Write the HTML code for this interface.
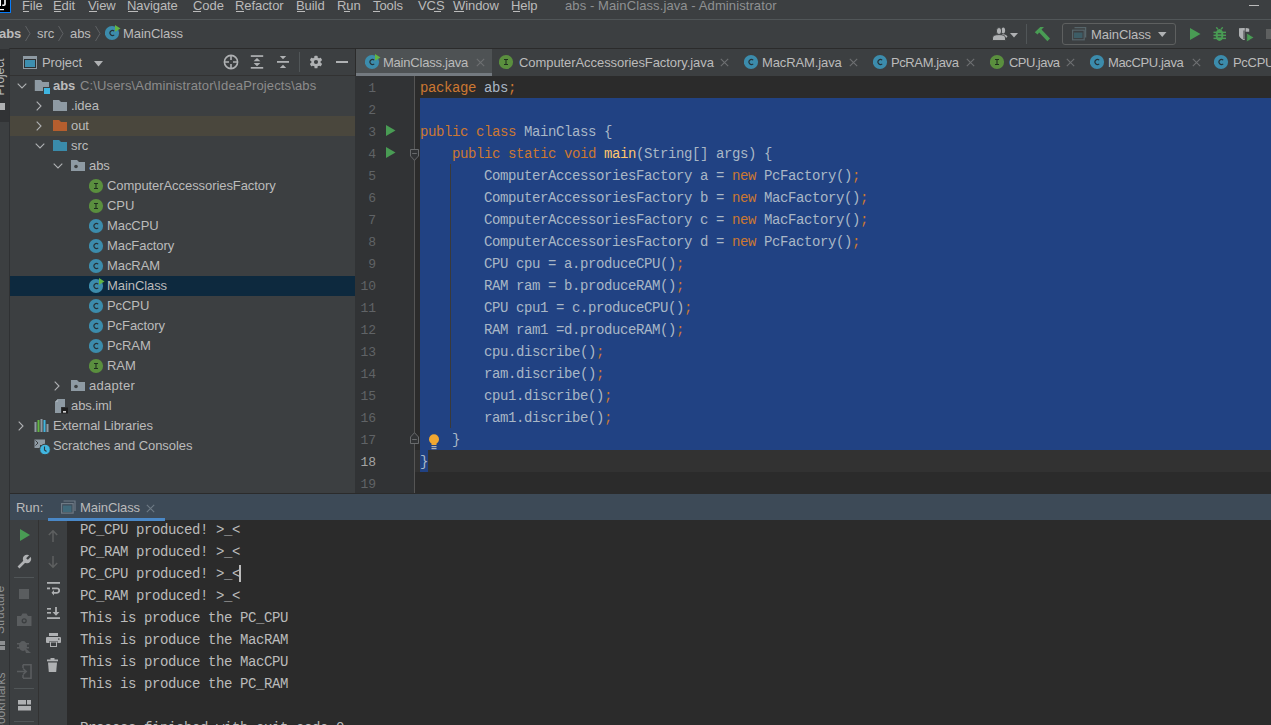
<!DOCTYPE html>
<html><head><meta charset="utf-8">
<style>
*{margin:0;padding:0;box-sizing:border-box}
html,body{width:1271px;height:725px;overflow:hidden;background:#3C3F41;font-family:"Liberation Sans",sans-serif;font-size:13px;color:#BBBBBB;position:relative}
.a{position:absolute;display:block}
.t{position:absolute;white-space:pre;line-height:20px;font-size:13px;letter-spacing:-0.07px}
.m{font-family:"Liberation Mono",monospace;font-size:14px;letter-spacing:-0.4px;white-space:pre;position:absolute;line-height:20px;color:#A9B7C6}
.k{color:#CC7832}.f{color:#FFC66D}
u{text-decoration:none;border-bottom:1px solid #BBBBBB;display:inline-block;line-height:12px}
</style></head><body>

<div class="a" style="left:0px;top:19px;width:1271px;height:1px;background:#515658;"></div>
<div class="a" style="left:0px;top:0px;width:11px;height:13px;background:#087CFA;"></div>
<div class="a" style="left:0px;top:0px;width:10px;height:12px;background:#000000;"></div>
<div class="a" style="left:0px;top:0px;width:1px;height:6px;background:#FFFFFF;"></div>
<svg class="a" style="left:0px;top:0px;" width="10" height="12" viewBox="0 0 10 12"><path d="M5 0 V4.2 Q5 5.2 3.8 5.2 H2.3" stroke="#fff" stroke-width="1.6" fill="none"/><rect x="0" y="9" width="4" height="1.2" fill="#fff"/></svg>
<div class="t" style="left:22px;top:-4px;color:#BBBBBB;">File</div>
<div class="t" style="left:53px;top:-4px;color:#BBBBBB;">Edit</div>
<div class="t" style="left:88px;top:-4px;color:#BBBBBB;">View</div>
<div class="t" style="left:127px;top:-4px;color:#BBBBBB;">Navigate</div>
<div class="t" style="left:193px;top:-4px;color:#BBBBBB;">Code</div>
<div class="t" style="left:235px;top:-4px;color:#BBBBBB;">Refactor</div>
<div class="t" style="left:296px;top:-4px;color:#BBBBBB;">Build</div>
<div class="t" style="left:337px;top:-4px;color:#BBBBBB;">Run</div>
<div class="t" style="left:373px;top:-4px;color:#BBBBBB;">Tools</div>
<div class="t" style="left:418px;top:-4px;color:#BBBBBB;">VCS</div>
<div class="t" style="left:453px;top:-4px;color:#BBBBBB;">Window</div>
<div class="t" style="left:511px;top:-4px;color:#BBBBBB;">Help</div>
<div class="a" style="left:23px;top:11px;width:6px;height:1px;background:#BBBBBB;"></div>
<div class="a" style="left:54px;top:11px;width:7px;height:1px;background:#BBBBBB;"></div>
<div class="a" style="left:89px;top:11px;width:8px;height:1px;background:#BBBBBB;"></div>
<div class="a" style="left:128px;top:11px;width:10px;height:1px;background:#BBBBBB;"></div>
<div class="a" style="left:193px;top:11px;width:8px;height:1px;background:#BBBBBB;"></div>
<div class="a" style="left:236px;top:11px;width:8px;height:1px;background:#BBBBBB;"></div>
<div class="a" style="left:297px;top:11px;width:8px;height:1px;background:#BBBBBB;"></div>
<div class="a" style="left:344px;top:11px;width:6px;height:1px;background:#BBBBBB;"></div>
<div class="a" style="left:373px;top:11px;width:7px;height:1px;background:#BBBBBB;"></div>
<div class="a" style="left:434px;top:11px;width:7px;height:1px;background:#BBBBBB;"></div>
<div class="a" style="left:454px;top:11px;width:10px;height:1px;background:#BBBBBB;"></div>
<div class="a" style="left:513px;top:11px;width:7px;height:1px;background:#BBBBBB;"></div>
<div class="t" style="left:565px;top:-4px;color:#8F9192;letter-spacing:0.1px">abs - MainClass.java - Administrator</div>
<div class="a" style="left:1249px;top:5px;width:10px;height:1px;background:#BBBBBB;"></div>
<div class="a" style="left:0px;top:48px;width:1271px;height:1px;background:#2B2B2B;"></div>
<div class="t" style="left:-1px;top:24px;color:#BBBBBB;font-weight:bold;">abs</div>
<svg class="a" style="left:25px;top:26px;" width="6" height="15" viewBox="0 0 6 15"><path d="M0.5 0 L5 7.5 L0.5 15" stroke="#5F6264" stroke-width="1" fill="none"/></svg>
<svg class="a" style="left:58px;top:26px;" width="6" height="15" viewBox="0 0 6 15"><path d="M0.5 0 L5 7.5 L0.5 15" stroke="#5F6264" stroke-width="1" fill="none"/></svg>
<svg class="a" style="left:95px;top:26px;" width="6" height="15" viewBox="0 0 6 15"><path d="M0.5 0 L5 7.5 L0.5 15" stroke="#5F6264" stroke-width="1" fill="none"/></svg>
<div class="t" style="left:37px;top:24px;color:#BBBBBB;">src</div>
<div class="t" style="left:70px;top:24px;color:#BBBBBB;">abs</div>
<svg class="a" style="left:105px;top:25px;" width="16" height="16" viewBox="0 0 16 16"><circle cx="7" cy="8" r="7.1" fill="#3C8CAC"/><path d="M9.2 6.2 A2.5 2.5 0 1 0 9.2 9.8" stroke="#263238" stroke-width="1.1" fill="none"/><path d="M10 0 L15.5 3.4 L10 6.8 Z" fill="#62B543"/></svg>
<div class="t" style="left:123px;top:24px;color:#BBBBBB;">MainClass</div>
<svg class="a" style="left:992px;top:26px;" width="17" height="15" viewBox="0 0 17 15"><g fill="#AFB1B3"><ellipse cx="11.3" cy="4.5" rx="1.8" ry="3"/><path d="M10 8 Q14 8 15.5 10.6 L14 12 L10 10 Z"/></g><g fill="#AFB1B3" stroke="#3C3F41" stroke-width="0.9"><ellipse cx="7" cy="5" rx="2.6" ry="3.5"/><path d="M0.5 14.5 V12 Q0.5 8.6 7 8.6 Q13.5 8.6 13.5 12 V14.5 Z"/></g></svg>
<svg class="a" style="left:1010px;top:33px;" width="8" height="5" viewBox="0 0 8 5"><path d="M0 0 H8 L4 4.5 Z" fill="#AFB1B3"/></svg>
<div class="a" style="left:1026px;top:24px;width:1px;height:20px;background:#515658;"></div>
<svg class="a" style="left:1034px;top:26px;" width="17" height="16" viewBox="0 0 17 16"><path d="M0.8 6.3 L6.3 1 H10 L6.8 4.2 L3.6 8.4 Z" fill="#499C54"/><path d="M4.3 5.6 L7 3 L16 12.5 L13.4 15.2 Z" fill="#499C54"/></svg>
<div class="a" style="left:1062px;top:23px;width:114px;height:22px;border:1px solid #5E6060;border-radius:3px"></div>
<svg class="a" style="left:1072px;top:26px;" width="15" height="15" viewBox="0 0 15 15"><path d="M2.5 1.6 H13.6 V11.5" stroke="#56656A" stroke-width="1.3" fill="none"/><rect x="0.6" y="4.2" width="11.6" height="9.6" stroke="#56656A" stroke-width="1.2" fill="none"/><rect x="2" y="6.5" width="8.5" height="5.5" fill="#3D5D66"/></svg>
<div class="t" style="left:1091px;top:25px;color:#BBBBBB;">MainClass</div>
<svg class="a" style="left:1158px;top:32px;" width="9" height="5" viewBox="0 0 9 5"><path d="M0 0 H8.5 L4.25 5 Z" fill="#AFB1B3"/></svg>
<svg class="a" style="left:1190px;top:28px;" width="11" height="12" viewBox="0 0 11 12"><path d="M0 0 L10.5 6 L0 12 Z" fill="#499C54"/></svg>
<svg class="a" style="left:1213px;top:27px;" width="14" height="14" viewBox="0 0 14 14"><g fill="#499C54"><ellipse cx="6.5" cy="8" rx="3.9" ry="6"/><rect x="0.5" y="4.6" width="12.5" height="1.5"/><rect x="0.5" y="7.6" width="12.5" height="1.5"/><rect x="0.5" y="10.6" width="12.5" height="1.5"/></g><path d="M3.3 0.3 L5 2.4 M9.7 0.3 L8 2.4" stroke="#499C54" stroke-width="1.4"/><rect x="4.8" y="6.2" width="3.4" height="1.1" fill="#3C3F41"/><rect x="4.8" y="9.2" width="3.4" height="1.1" fill="#3C3F41"/></svg>
<svg class="a" style="left:1238px;top:27px;" width="17" height="16" viewBox="0 0 17 16"><path d="M1 1.6 Q3.5 1 6 1 V13 Q2 11.5 1 8 Z" fill="#AFB1B3"/><path d="M7.6 1 Q10 1 11.2 1.8 V4.8 H7.6 Z" fill="#AFB1B3"/><path d="M1 1.6 Q3.5 1 6.8 1 V13 Q2 11.5 1 8 Z" fill="#AFB1B3"/><path d="M6 3.5 V12" stroke="#3C3F41" stroke-width="1"/><path d="M8.7 6 L16 10.5 L8.7 15 Z" fill="#499C54" stroke="#3C3F41" stroke-width="0.8"/></svg>
<div class="a" style="left:1266px;top:29px;width:5px;height:10px;background:#5E6060;"></div>
<div class="a" style="left:0px;top:48px;width:9px;height:677px;background:#3C3F41;"></div>
<div class="a" style="left:0px;top:49px;width:9px;height:73px;background:#313335;"></div>
<div class="a" style="left:9px;top:48px;width:1px;height:677px;background:#2F3133;"></div>
<div class="t" style="left:-25px;top:67px;transform:rotate(-90deg);transform-origin:center;color:#BBBBBB;font-size:12px;width:50px;text-align:center">Project</div>
<div class="a" style="left:0px;top:103px;width:5px;height:7px;background:#AFB1B3;"></div>
<div class="t" style="left:-30px;top:600px;transform:rotate(-90deg);color:#8E9092;font-size:12px;width:60px;text-align:center">Structure</div>
<div class="a" style="left:0px;top:641px;width:5px;height:4px;background:#8E9092;"></div>
<div class="a" style="left:0px;top:646px;width:5px;height:4px;background:#8E9092;"></div>
<div class="t" style="left:-34px;top:687px;transform:rotate(-90deg);color:#8E9092;font-size:12px;width:70px;text-align:left">Bookmarks</div>
<div class="a" style="left:10px;top:75px;width:345px;height:1px;background:#323232;"></div>
<svg class="a" style="left:23px;top:56px;" width="14" height="13" viewBox="0 0 14 13"><rect x="0" y="0" width="14" height="13" fill="#8E9AA3"/><rect x="1" y="3" width="12" height="9" fill="#2E3133"/><rect x="2" y="4" width="10" height="7" fill="#3D8FB0"/></svg>
<div class="t" style="left:42px;top:53px;color:#BBBBBB;">Project</div>
<svg class="a" style="left:94px;top:61px;" width="9" height="6" viewBox="0 0 9 6"><path d="M0 0 H9 L4.5 5.5 Z" fill="#AFB1B3"/></svg>
<svg class="a" style="left:223px;top:54px;" width="16" height="16" viewBox="0 0 16 16"><circle cx="8" cy="8" r="6.6" stroke="#AFB1B3" stroke-width="1.6" fill="none"/><path d="M8 1 V6 M8 10 V15 M1 8 H6 M10 8 H15" stroke="#AFB1B3" stroke-width="1.6"/></svg>
<svg class="a" style="left:250px;top:54px;" width="14" height="16" viewBox="0 0 14 16"><rect x="0.8" y="1.2" width="12.4" height="1.7" fill="#AFB1B3"/><rect x="0.8" y="13" width="12.4" height="1.7" fill="#AFB1B3"/><path d="M3.6 7.2 L7 4 L10.4 7.2 Z M3.6 9 L7 12.2 L10.4 9 Z" fill="#AFB1B3"/></svg>
<svg class="a" style="left:276px;top:54px;" width="14" height="16" viewBox="0 0 14 16"><rect x="1" y="7" width="12" height="1.8" fill="#AFB1B3"/><path d="M3.8 2 H10.2 L7 5.2 Z M3.8 14 H10.2 L7 10.7 Z" fill="#AFB1B3"/></svg>
<div class="a" style="left:299px;top:52px;width:1px;height:20px;background:#515658;"></div>
<svg class="a" style="left:308px;top:54px;" width="16" height="16" viewBox="0 0 16 16"><g transform="translate(8 8) scale(0.9) translate(-8 -8)"><g fill="#AFB1B3"><circle cx="8" cy="8" r="5.2"/><rect x="6.3" y="1" width="3.4" height="14" rx="0.6"/><rect x="6.3" y="1" width="3.4" height="14" rx="0.6" transform="rotate(60 8 8)"/><rect x="6.3" y="1" width="3.4" height="14" rx="0.6" transform="rotate(120 8 8)"/></g><circle cx="8" cy="8" r="2.3" fill="#3C3F41"/></g></svg>
<div class="a" style="left:336px;top:61px;width:12px;height:2px;background:#AFB1B3;"></div>
<div class="a" style="left:10px;top:116px;width:345px;height:20px;background:#4A473D;"></div>
<div class="a" style="left:10px;top:276px;width:345px;height:20px;background:#0D293E;"></div>
<svg class="a" style="left:17px;top:83px;" width="10" height="6" viewBox="0 0 10 6"><path d="M0.7 0.7 L5 5 L9.3 0.7" stroke="#AFB1B3" stroke-width="1.1" fill="none"/></svg>
<svg class="a" style="left:34px;top:80px;" width="17" height="15" viewBox="0 0 17 15"><path d="M0.8 0 H7 L8.5 2 H15 V11 H0.8 Z" fill="#8E9AA3"/><rect x="9" y="7" width="8" height="8" fill="#3C3F41"/><rect x="10" y="8" width="6" height="6" fill="#3FB5E0"/></svg>
<div class="t" style="left:53px;top:76px;color:#BBBBBB;font-weight:bold;">abs</div>
<div class="t" style="left:80px;top:76px;color:#8C8C8C;letter-spacing:0.13px">C:\Users\Administrator\IdeaProjects\abs</div>
<svg class="a" style="left:36px;top:101px;" width="6" height="10" viewBox="0 0 6 10"><path d="M0.7 0.7 L5 5 L0.7 9.3" stroke="#AFB1B3" stroke-width="1.1" fill="none"/></svg>
<svg class="a" style="left:53px;top:100px;" width="14" height="11" viewBox="0 0 14 11"><path d="M0 0 H6 L8 2 H14 V11 H0 Z" fill="#8E9AA3"/></svg>
<div class="t" style="left:71px;top:96px;color:#BBBBBB;">.idea</div>
<svg class="a" style="left:36px;top:121px;" width="6" height="10" viewBox="0 0 6 10"><path d="M0.7 0.7 L5 5 L0.7 9.3" stroke="#AFB1B3" stroke-width="1.1" fill="none"/></svg>
<svg class="a" style="left:53px;top:120px;" width="14" height="11" viewBox="0 0 14 11"><path d="M0 0 H6 L8 2 H14 V11 H0 Z" fill="#B55E2E"/></svg>
<div class="t" style="left:71px;top:116px;color:#BBBBBB;">out</div>
<svg class="a" style="left:35px;top:143px;" width="10" height="6" viewBox="0 0 10 6"><path d="M0.7 0.7 L5 5 L9.3 0.7" stroke="#AFB1B3" stroke-width="1.1" fill="none"/></svg>
<svg class="a" style="left:53px;top:140px;" width="14" height="11" viewBox="0 0 14 11"><path d="M0 0 H6 L8 2 H14 V11 H0 Z" fill="#3A8BAA"/></svg>
<div class="t" style="left:71px;top:136px;color:#BBBBBB;">src</div>
<svg class="a" style="left:53px;top:163px;" width="10" height="6" viewBox="0 0 10 6"><path d="M0.7 0.7 L5 5 L9.3 0.7" stroke="#AFB1B3" stroke-width="1.1" fill="none"/></svg>
<svg class="a" style="left:71px;top:160px;" width="14" height="11" viewBox="0 0 14 11"><path d="M0 0 H6 L8 2 H14 V11 H0 Z" fill="#8E9AA3"/><circle cx="5" cy="6.5" r="1.8" fill="#3C3F41"/></svg>
<div class="t" style="left:89px;top:156px;color:#BBBBBB;">abs</div>
<svg class="a" style="left:89px;top:178px;" width="16" height="16" viewBox="0 0 16 16"><circle cx="7" cy="8" r="7.1" fill="#5A8F3E"/><path d="M5 5.5 H9 M7 5.5 V10.5 M5 10.5 H9" stroke="#1F2E1F" stroke-width="1.05" fill="none"/></svg>
<div class="t" style="left:107px;top:176px;color:#BBBBBB;">ComputerAccessoriesFactory</div>
<svg class="a" style="left:89px;top:198px;" width="16" height="16" viewBox="0 0 16 16"><circle cx="7" cy="8" r="7.1" fill="#5A8F3E"/><path d="M5 5.5 H9 M7 5.5 V10.5 M5 10.5 H9" stroke="#1F2E1F" stroke-width="1.05" fill="none"/></svg>
<div class="t" style="left:107px;top:196px;color:#BBBBBB;">CPU</div>
<svg class="a" style="left:89px;top:218px;" width="16" height="16" viewBox="0 0 16 16"><circle cx="7" cy="8" r="7.1" fill="#3C8CAC"/><path d="M9.2 6.2 A2.5 2.5 0 1 0 9.2 9.8" stroke="#263238" stroke-width="1.1" fill="none"/></svg>
<div class="t" style="left:107px;top:216px;color:#BBBBBB;">MacCPU</div>
<svg class="a" style="left:89px;top:238px;" width="16" height="16" viewBox="0 0 16 16"><circle cx="7" cy="8" r="7.1" fill="#3C8CAC"/><path d="M9.2 6.2 A2.5 2.5 0 1 0 9.2 9.8" stroke="#263238" stroke-width="1.1" fill="none"/></svg>
<div class="t" style="left:107px;top:236px;color:#BBBBBB;">MacFactory</div>
<svg class="a" style="left:89px;top:258px;" width="16" height="16" viewBox="0 0 16 16"><circle cx="7" cy="8" r="7.1" fill="#3C8CAC"/><path d="M9.2 6.2 A2.5 2.5 0 1 0 9.2 9.8" stroke="#263238" stroke-width="1.1" fill="none"/></svg>
<div class="t" style="left:107px;top:256px;color:#BBBBBB;">MacRAM</div>
<svg class="a" style="left:89px;top:278px;" width="16" height="16" viewBox="0 0 16 16"><circle cx="7" cy="8" r="7.1" fill="#3C8CAC"/><path d="M9.2 6.2 A2.5 2.5 0 1 0 9.2 9.8" stroke="#263238" stroke-width="1.1" fill="none"/><path d="M10 0 L15.5 3.4 L10 6.8 Z" fill="#62B543"/></svg>
<div class="t" style="left:107px;top:276px;color:#BBBBBB;">MainClass</div>
<svg class="a" style="left:89px;top:298px;" width="16" height="16" viewBox="0 0 16 16"><circle cx="7" cy="8" r="7.1" fill="#3C8CAC"/><path d="M9.2 6.2 A2.5 2.5 0 1 0 9.2 9.8" stroke="#263238" stroke-width="1.1" fill="none"/></svg>
<div class="t" style="left:107px;top:296px;color:#BBBBBB;">PcCPU</div>
<svg class="a" style="left:89px;top:318px;" width="16" height="16" viewBox="0 0 16 16"><circle cx="7" cy="8" r="7.1" fill="#3C8CAC"/><path d="M9.2 6.2 A2.5 2.5 0 1 0 9.2 9.8" stroke="#263238" stroke-width="1.1" fill="none"/></svg>
<div class="t" style="left:107px;top:316px;color:#BBBBBB;">PcFactory</div>
<svg class="a" style="left:89px;top:338px;" width="16" height="16" viewBox="0 0 16 16"><circle cx="7" cy="8" r="7.1" fill="#3C8CAC"/><path d="M9.2 6.2 A2.5 2.5 0 1 0 9.2 9.8" stroke="#263238" stroke-width="1.1" fill="none"/></svg>
<div class="t" style="left:107px;top:336px;color:#BBBBBB;">PcRAM</div>
<svg class="a" style="left:89px;top:358px;" width="16" height="16" viewBox="0 0 16 16"><circle cx="7" cy="8" r="7.1" fill="#5A8F3E"/><path d="M5 5.5 H9 M7 5.5 V10.5 M5 10.5 H9" stroke="#1F2E1F" stroke-width="1.05" fill="none"/></svg>
<div class="t" style="left:107px;top:356px;color:#BBBBBB;">RAM</div>
<svg class="a" style="left:54px;top:381px;" width="6" height="10" viewBox="0 0 6 10"><path d="M0.7 0.7 L5 5 L0.7 9.3" stroke="#AFB1B3" stroke-width="1.1" fill="none"/></svg>
<svg class="a" style="left:71px;top:380px;" width="14" height="11" viewBox="0 0 14 11"><path d="M0 0 H6 L8 2 H14 V11 H0 Z" fill="#8E9AA3"/><circle cx="5" cy="6.5" r="1.8" fill="#3C3F41"/></svg>
<div class="t" style="left:89px;top:376px;color:#BBBBBB;letter-spacing:0.3px">adapter</div>
<svg class="a" style="left:54px;top:399px;" width="15" height="15" viewBox="0 0 15 15"><path d="M1 3 L3.8 0 H11 V14 H1 Z" fill="#8E9AA3"/><path d="M1 3 L3.8 0 V3 Z" fill="#A8B2B9"/><rect x="7" y="8" width="8" height="7" fill="#3C3F41"/><rect x="7.5" y="8.5" width="6.5" height="6" fill="#1E1E1E"/><rect x="9" y="12.2" width="3" height="1.3" fill="#fff"/></svg>
<div class="t" style="left:71px;top:396px;color:#BBBBBB;">abs.iml</div>
<svg class="a" style="left:18px;top:421px;" width="6" height="10" viewBox="0 0 6 10"><path d="M0.7 0.7 L5 5 L0.7 9.3" stroke="#AFB1B3" stroke-width="1.1" fill="none"/></svg>
<svg class="a" style="left:34px;top:419px;" width="16" height="13" viewBox="0 0 16 13"><rect x="0.5" y="3" width="2" height="10" fill="#8E9AA3"/><rect x="3.5" y="1" width="2" height="12" fill="#62B543"/><rect x="6.5" y="0" width="2" height="13" fill="#8E9AA3"/><rect x="9.5" y="1" width="2" height="12" fill="#40B6E0"/><rect x="12.5" y="5" width="2" height="8" fill="#8E9AA3"/></svg>
<div class="t" style="left:53px;top:416px;color:#BBBBBB;">External Libraries</div>
<svg class="a" style="left:34px;top:439px;" width="17" height="16" viewBox="0 0 17 16"><path d="M0.5 0.5 H11 V6 H6 V9 H0.5 Z" fill="#8E9AA3"/><path d="M1.5 1.5 L4 4 L1.5 6.5" stroke="#3C3F41" stroke-width="1" fill="none"/><circle cx="11" cy="10.5" r="5.3" fill="#40B6E0" stroke="#3C3F41" stroke-width="1"/><path d="M10.5 7.5 V11 L12.5 12.5" stroke="#2B3A40" stroke-width="1.1" fill="none"/></svg>
<div class="t" style="left:53px;top:436px;color:#BBBBBB;">Scratches and Consoles</div>
<div class="a" style="left:355px;top:48px;width:1px;height:445px;background:#2B2B2B;"></div>
<div class="a" style="left:356px;top:49px;width:915px;height:27px;background:#3C3F41;"></div>
<div class="a" style="left:356px;top:49px;width:136px;height:24px;background:#4E5254;"></div>
<div class="a" style="left:356px;top:73px;width:136px;height:3px;background:#747A80;"></div>
<svg class="a" style="left:365px;top:54px;" width="16" height="16" viewBox="0 0 16 16"><circle cx="7" cy="8" r="7.1" fill="#3C8CAC"/><path d="M9.2 6.2 A2.5 2.5 0 1 0 9.2 9.8" stroke="#263238" stroke-width="1.1" fill="none"/><path d="M10 0 L15.5 3.4 L10 6.8 Z" fill="#62B543"/></svg>
<div class="t" style="left:383px;top:53px;color:#BBBBBB;letter-spacing:-0.22px">MainClass.java</div>
<svg class="a" style="left:476px;top:58px;" width="9" height="9" viewBox="0 0 9 9"><path d="M0.8 0.8 L8.2 8.2 M8.2 0.8 L0.8 8.2" stroke="#6E7072" stroke-width="1.1"/></svg>
<svg class="a" style="left:499px;top:54px;" width="16" height="16" viewBox="0 0 16 16"><circle cx="7" cy="8" r="7.1" fill="#5A8F3E"/><path d="M5 5.5 H9 M7 5.5 V10.5 M5 10.5 H9" stroke="#1F2E1F" stroke-width="1.05" fill="none"/></svg>
<div class="t" style="left:519px;top:53px;color:#BBBBBB;letter-spacing:-0.07px">ComputerAccessoriesFactory.java</div>
<svg class="a" style="left:720px;top:58px;" width="9" height="9" viewBox="0 0 9 9"><path d="M0.8 0.8 L8.2 8.2 M8.2 0.8 L0.8 8.2" stroke="#6E7072" stroke-width="1.1"/></svg>
<svg class="a" style="left:744px;top:54px;" width="16" height="16" viewBox="0 0 16 16"><circle cx="7" cy="8" r="7.1" fill="#3C8CAC"/><path d="M9.2 6.2 A2.5 2.5 0 1 0 9.2 9.8" stroke="#263238" stroke-width="1.1" fill="none"/></svg>
<div class="t" style="left:762px;top:53px;color:#BBBBBB;letter-spacing:-0.11px">MacRAM.java</div>
<svg class="a" style="left:849px;top:58px;" width="9" height="9" viewBox="0 0 9 9"><path d="M0.8 0.8 L8.2 8.2 M8.2 0.8 L0.8 8.2" stroke="#6E7072" stroke-width="1.1"/></svg>
<svg class="a" style="left:873px;top:54px;" width="16" height="16" viewBox="0 0 16 16"><circle cx="7" cy="8" r="7.1" fill="#3C8CAC"/><path d="M9.2 6.2 A2.5 2.5 0 1 0 9.2 9.8" stroke="#263238" stroke-width="1.1" fill="none"/></svg>
<div class="t" style="left:891px;top:53px;color:#BBBBBB;letter-spacing:-0.4px">PcRAM.java</div>
<svg class="a" style="left:966px;top:58px;" width="9" height="9" viewBox="0 0 9 9"><path d="M0.8 0.8 L8.2 8.2 M8.2 0.8 L0.8 8.2" stroke="#6E7072" stroke-width="1.1"/></svg>
<svg class="a" style="left:990px;top:54px;" width="16" height="16" viewBox="0 0 16 16"><circle cx="7" cy="8" r="7.1" fill="#5A8F3E"/><path d="M5 5.5 H9 M7 5.5 V10.5 M5 10.5 H9" stroke="#1F2E1F" stroke-width="1.05" fill="none"/></svg>
<div class="t" style="left:1009px;top:53px;color:#BBBBBB;letter-spacing:-0.55px">CPU.java</div>
<svg class="a" style="left:1066px;top:58px;" width="9" height="9" viewBox="0 0 9 9"><path d="M0.8 0.8 L8.2 8.2 M8.2 0.8 L0.8 8.2" stroke="#6E7072" stroke-width="1.1"/></svg>
<svg class="a" style="left:1090px;top:54px;" width="16" height="16" viewBox="0 0 16 16"><circle cx="7" cy="8" r="7.1" fill="#3C8CAC"/><path d="M9.2 6.2 A2.5 2.5 0 1 0 9.2 9.8" stroke="#263238" stroke-width="1.1" fill="none"/></svg>
<div class="t" style="left:1108px;top:53px;color:#BBBBBB;letter-spacing:-0.37px">MacCPU.java</div>
<svg class="a" style="left:1192px;top:58px;" width="9" height="9" viewBox="0 0 9 9"><path d="M0.8 0.8 L8.2 8.2 M8.2 0.8 L0.8 8.2" stroke="#6E7072" stroke-width="1.1"/></svg>
<svg class="a" style="left:1214px;top:54px;" width="16" height="16" viewBox="0 0 16 16"><circle cx="7" cy="8" r="7.1" fill="#3C8CAC"/><path d="M9.2 6.2 A2.5 2.5 0 1 0 9.2 9.8" stroke="#263238" stroke-width="1.1" fill="none"/></svg>
<div class="t" style="left:1233px;top:53px;color:#BBBBBB;letter-spacing:-0.3px">PcCPU.java</div>
<div class="a" style="left:355px;top:76px;width:59px;height:417px;background:#313335;"></div>
<div class="a" style="left:414px;top:76px;width:1px;height:417px;background:#555555;"></div>
<div class="a" style="left:415px;top:76px;width:856px;height:417px;background:#2B2B2B;"></div>
<div class="a" style="left:420px;top:98px;width:851px;height:352px;background:#214283;"></div>
<div class="a" style="left:415px;top:450px;width:856px;height:22px;background:#323232;"></div>
<div class="a" style="left:420px;top:450px;width:8px;height:22px;background:#214283;"></div>
<div class="a" style="left:450px;top:164px;width:1px;height:264px;background:#3A3A3A;"></div>
<div class="m" style="left:344px;top:79px;width:32px;text-align:right;color:#606366;font-size:13px;letter-spacing:0">1</div>
<div class="m" style="left:344px;top:101px;width:32px;text-align:right;color:#606366;font-size:13px;letter-spacing:0">2</div>
<div class="m" style="left:344px;top:123px;width:32px;text-align:right;color:#606366;font-size:13px;letter-spacing:0">3</div>
<div class="m" style="left:344px;top:145px;width:32px;text-align:right;color:#606366;font-size:13px;letter-spacing:0">4</div>
<div class="m" style="left:344px;top:167px;width:32px;text-align:right;color:#606366;font-size:13px;letter-spacing:0">5</div>
<div class="m" style="left:344px;top:189px;width:32px;text-align:right;color:#606366;font-size:13px;letter-spacing:0">6</div>
<div class="m" style="left:344px;top:211px;width:32px;text-align:right;color:#606366;font-size:13px;letter-spacing:0">7</div>
<div class="m" style="left:344px;top:233px;width:32px;text-align:right;color:#606366;font-size:13px;letter-spacing:0">8</div>
<div class="m" style="left:344px;top:255px;width:32px;text-align:right;color:#606366;font-size:13px;letter-spacing:0">9</div>
<div class="m" style="left:344px;top:277px;width:32px;text-align:right;color:#606366;font-size:13px;letter-spacing:0">10</div>
<div class="m" style="left:344px;top:299px;width:32px;text-align:right;color:#606366;font-size:13px;letter-spacing:0">11</div>
<div class="m" style="left:344px;top:321px;width:32px;text-align:right;color:#606366;font-size:13px;letter-spacing:0">12</div>
<div class="m" style="left:344px;top:343px;width:32px;text-align:right;color:#606366;font-size:13px;letter-spacing:0">13</div>
<div class="m" style="left:344px;top:365px;width:32px;text-align:right;color:#606366;font-size:13px;letter-spacing:0">14</div>
<div class="m" style="left:344px;top:387px;width:32px;text-align:right;color:#606366;font-size:13px;letter-spacing:0">15</div>
<div class="m" style="left:344px;top:409px;width:32px;text-align:right;color:#606366;font-size:13px;letter-spacing:0">16</div>
<div class="m" style="left:344px;top:431px;width:32px;text-align:right;color:#606366;font-size:13px;letter-spacing:0">17</div>
<div class="m" style="left:344px;top:453px;width:32px;text-align:right;color:#A4A3A3;font-size:13px;letter-spacing:0">18</div>
<div class="m" style="left:344px;top:475px;width:32px;text-align:right;color:#606366;font-size:13px;letter-spacing:0">19</div>
<svg class="a" style="left:386px;top:125px;" width="10" height="11" viewBox="0 0 10 11"><path d="M0 0 L9.5 5.5 L0 11 Z" fill="#499C54"/></svg>
<svg class="a" style="left:386px;top:147px;" width="10" height="11" viewBox="0 0 10 11"><path d="M0 0 L9.5 5.5 L0 11 Z" fill="#499C54"/></svg>
<svg class="a" style="left:410px;top:149px;" width="9" height="12" viewBox="0 0 9 12"><path d="M0.5 0.5 H8.5 V7 L4.5 11.3 L0.5 7 Z" fill="#313335" stroke="#686A6C" stroke-width="1"/><path d="M2.2 4.5 H6.8" stroke="#686A6C" stroke-width="1"/></svg>
<svg class="a" style="left:410px;top:432px;" width="9" height="12" viewBox="0 0 9 12"><path d="M0.5 11.5 H8.5 V5 L4.5 0.7 L0.5 5 Z" fill="#313335" stroke="#686A6C" stroke-width="1"/><path d="M2.2 7.5 H6.8" stroke="#686A6C" stroke-width="1"/></svg>
<svg class="a" style="left:428px;top:434px;" width="12" height="16" viewBox="0 0 12 16"><circle cx="6" cy="5.2" r="5" fill="#F0A732"/><rect x="3.5" y="8" width="5" height="3" fill="#F0A732"/><rect x="3.5" y="12" width="5" height="1.2" fill="#AFB1B3"/><rect x="3.5" y="14" width="5" height="1.2" fill="#AFB1B3"/></svg>
<div class="m" style="left:420px;top:78px;"><span class="k">package</span> abs<span class="k">;</span></div>
<div class="m" style="left:420px;top:122px;"><span class="k">public class</span> MainClass {</div>
<div class="m" style="left:420px;top:144px;">    <span class="k">public static void</span> <span class="f">main</span>(String[] args) {</div>
<div class="m" style="left:420px;top:166px;">        ComputerAccessoriesFactory a = <span class="k">new</span> PcFactory()<span class="k">;</span></div>
<div class="m" style="left:420px;top:188px;">        ComputerAccessoriesFactory b = <span class="k">new</span> MacFactory()<span class="k">;</span></div>
<div class="m" style="left:420px;top:210px;">        ComputerAccessoriesFactory c = <span class="k">new</span> MacFactory()<span class="k">;</span></div>
<div class="m" style="left:420px;top:232px;">        ComputerAccessoriesFactory d = <span class="k">new</span> PcFactory()<span class="k">;</span></div>
<div class="m" style="left:420px;top:254px;">        CPU cpu = a.produceCPU()<span class="k">;</span></div>
<div class="m" style="left:420px;top:276px;">        RAM ram = b.produceRAM()<span class="k">;</span></div>
<div class="m" style="left:420px;top:298px;">        CPU cpu1 = c.produceCPU()<span class="k">;</span></div>
<div class="m" style="left:420px;top:320px;">        RAM ram1 =d.produceRAM()<span class="k">;</span></div>
<div class="m" style="left:420px;top:342px;">        cpu.discribe()<span class="k">;</span></div>
<div class="m" style="left:420px;top:364px;">        ram.discribe()<span class="k">;</span></div>
<div class="m" style="left:420px;top:386px;">        cpu1.discribe()<span class="k">;</span></div>
<div class="m" style="left:420px;top:408px;">        ram1.discribe()<span class="k">;</span></div>
<div class="m" style="left:452px;top:430px;">}</div>
<div class="m" style="left:420px;top:452px;">}</div>
<div class="a" style="left:10px;top:493px;width:1261px;height:1px;background:#2B2B2B;"></div>
<div class="a" style="left:10px;top:494px;width:1261px;height:26px;background:#3D4A57;"></div>
<div class="t" style="left:16px;top:498px;color:#BBBBBB;">Run:</div>
<svg class="a" style="left:61px;top:500px;" width="15" height="14" viewBox="0 0 15 14"><path d="M2.5 1 H14 V11" stroke="#6E7A85" stroke-width="1.2" fill="none"/><rect x="0.6" y="3.6" width="11.5" height="9.5" stroke="#6E7A85" stroke-width="1.2" fill="none"/><rect x="2" y="5.5" width="8.5" height="6.5" fill="#40697A"/></svg>
<div class="t" style="left:80px;top:498px;color:#BBBBBB;">MainClass</div>
<svg class="a" style="left:146px;top:504px;" width="9" height="9" viewBox="0 0 9 9"><path d="M0.8 0.8 L8.2 8.2 M8.2 0.8 L0.8 8.2" stroke="#6E7A85" stroke-width="1.1"/></svg>
<div class="a" style="left:10px;top:520px;width:28px;height:205px;background:#3C3F41;"></div>
<div class="a" style="left:38px;top:520px;width:1px;height:205px;background:#323232;"></div>
<div class="a" style="left:39px;top:520px;width:28px;height:205px;background:#3C3F41;"></div>
<div class="a" style="left:67px;top:520px;width:1204px;height:205px;background:#2B2B2B;"></div>
<div class="a" style="left:48px;top:518px;width:117px;height:3px;background:#4A88C7;"></div>
<svg class="a" style="left:20px;top:529px;" width="10" height="12" viewBox="0 0 10 12"><path d="M0 0 L10 6 L0 12 Z" fill="#499C54"/></svg>
<svg class="a" style="left:17px;top:554px;" width="15" height="15" viewBox="0 0 15 15"><path d="M1.5 13.5 L8 7" stroke="#AFB1B3" stroke-width="2.6"/><circle cx="10" cy="5" r="4.2" fill="#AFB1B3"/><path d="M10 5 L14 1" stroke="#3C3F41" stroke-width="2.4"/></svg>
<div class="a" style="left:14px;top:577px;width:20px;height:1px;background:#515658;"></div>
<div class="a" style="left:19px;top:589px;width:10px;height:10px;background:#5A5D5F;"></div>
<svg class="a" style="left:17px;top:613px;" width="15" height="13" viewBox="0 0 15 13"><path d="M0 3 H4 L5.5 0.5 H9.5 L11 3 H14.5 V13 H0 Z" fill="#5A5D5F"/><circle cx="7.2" cy="7.8" r="2.6" fill="#3C3F41"/><circle cx="7.2" cy="7.8" r="1.3" fill="#5A5D5F"/></svg>
<svg class="a" style="left:17px;top:638px;" width="15" height="16" viewBox="0 0 15 16"><g fill="#5A5D5F"><ellipse cx="6" cy="8" rx="4" ry="5"/><rect x="0" y="5" width="12" height="1.5"/><rect x="0" y="9" width="12" height="1.5"/><path d="M7 9 L14 15 L9 15 Z"/></g></svg>
<svg class="a" style="left:17px;top:664px;" width="15" height="15" viewBox="0 0 15 15"><path d="M6 0.8 H14 V14.2 H6 M6 11 V14 M6 0.8 V4" stroke="#5A5D5F" stroke-width="1.6" fill="none"/><path d="M0 7.5 H9 M6 4.5 L9.2 7.5 L6 10.5" stroke="#5A5D5F" stroke-width="1.6" fill="none"/></svg>
<div class="a" style="left:14px;top:688px;width:20px;height:1px;background:#515658;"></div>
<svg class="a" style="left:18px;top:700px;" width="13" height="11" viewBox="0 0 13 11"><rect x="0" y="0" width="8" height="4.5" fill="#AFB1B3"/><rect x="9" y="0" width="4" height="4.5" fill="#AFB1B3"/><rect x="0" y="6" width="13" height="4.5" fill="#AFB1B3"/></svg>
<div class="a" style="left:14px;top:721px;width:20px;height:1px;background:#515658;"></div>
<svg class="a" style="left:48px;top:530px;" width="10" height="12" viewBox="0 0 10 12"><path d="M5 1 V12 M0.8 5 L5 0.8 L9.2 5" stroke="#5E6060" stroke-width="1.5" fill="none"/></svg>
<svg class="a" style="left:48px;top:556px;" width="10" height="12" viewBox="0 0 10 12"><path d="M5 0 V11 M0.8 7 L5 11.2 L9.2 7" stroke="#5E6060" stroke-width="1.5" fill="none"/></svg>
<svg class="a" style="left:47px;top:582px;" width="13" height="14" viewBox="0 0 13 14"><rect x="0" y="0" width="13" height="1.8" fill="#AFB1B3"/><rect x="0" y="5.5" width="3" height="1.8" fill="#AFB1B3"/><path d="M5 6.4 H10 Q12.2 6.4 12.2 8.6 Q12.2 10.8 10 10.8 H6" stroke="#AFB1B3" stroke-width="1.8" fill="none"/><path d="M7 8 L4.5 10.8 L7 13.6 Z" fill="#AFB1B3"/></svg>
<svg class="a" style="left:47px;top:607px;" width="13" height="12" viewBox="0 0 13 12"><rect x="0" y="1" width="4" height="1.6" fill="#AFB1B3"/><rect x="0" y="5" width="4" height="1.6" fill="#AFB1B3"/><rect x="0" y="10.2" width="13" height="1.8" fill="#AFB1B3"/><path d="M9 0 V7" stroke="#AFB1B3" stroke-width="1.8"/><path d="M5.5 5 L9 8.8 L12.5 5 Z" fill="#AFB1B3"/></svg>
<svg class="a" style="left:46px;top:633px;" width="15" height="14" viewBox="0 0 15 14"><rect x="3" y="0" width="9" height="3" fill="#AFB1B3"/><rect x="0" y="4" width="15" height="6" rx="1" fill="#AFB1B3"/><rect x="3.5" y="8" width="8" height="5" fill="#3C3F41"/><rect x="4.5" y="9" width="6" height="4.5" fill="#3C3F41" stroke="#AFB1B3" stroke-width="1"/><rect x="12" y="5.5" width="1.5" height="1.2" fill="#3C3F41"/></svg>
<svg class="a" style="left:47px;top:658px;" width="12" height="14" viewBox="0 0 12 14"><rect x="0" y="1.5" width="11" height="1.8" fill="#AFB1B3"/><rect x="3.5" y="0" width="4" height="2" fill="#AFB1B3"/><path d="M1 4.5 H10 L9.2 14 H1.8 Z" fill="#AFB1B3"/></svg>
<div class="m" style="left:80px;top:520px;color:#BBBBBB">PC_CPU produced! &gt;_&lt;</div>
<div class="m" style="left:80px;top:542px;color:#BBBBBB">PC_RAM produced! &gt;_&lt;</div>
<div class="m" style="left:80px;top:564px;color:#BBBBBB">PC_CPU produced! &gt;_&lt;</div>
<div class="m" style="left:80px;top:586px;color:#BBBBBB">PC_RAM produced! &gt;_&lt;</div>
<div class="m" style="left:80px;top:608px;color:#BBBBBB">This is produce the PC_CPU</div>
<div class="m" style="left:80px;top:630px;color:#BBBBBB">This is produce the MacRAM</div>
<div class="m" style="left:80px;top:652px;color:#BBBBBB">This is produce the MacCPU</div>
<div class="m" style="left:80px;top:674px;color:#BBBBBB">This is produce the PC_RAM</div>
<div class="m" style="left:80px;top:718px;color:#BBBBBB">Process finished with exit code 0</div>
<div class="a" style="left:239px;top:565px;width:2px;height:17px;background:#BBBBBB;"></div>
</body></html>
